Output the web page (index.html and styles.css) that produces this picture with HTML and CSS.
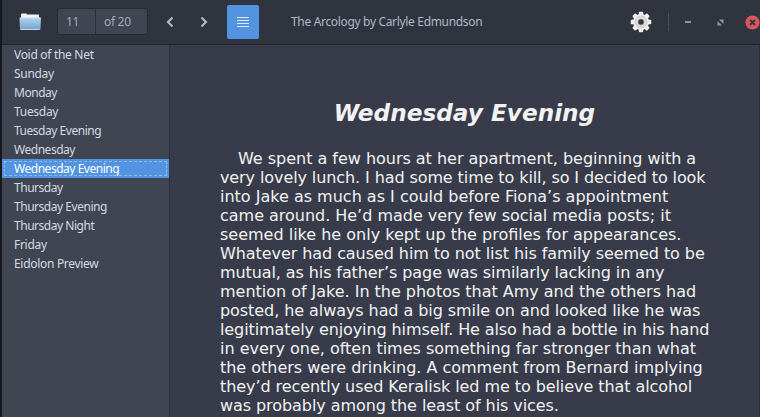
FILE: index.html
```html
<!DOCTYPE html>
<html lang="en">
<head>
<meta charset="utf-8">
<title>The Arcology by Carlyle Edmundson</title>
<link rel="stylesheet" href="styles.css">
</head>
<body>
<div class="window">
  <header class="toolbar">
    <svg class="folder" width="24" height="20" viewBox="0 0 24 20">
      <defs><linearGradient id="blue" x1="0" y1="0" x2="0" y2="1"><stop offset="0" stop-color="#b5d3ea"/><stop offset="1" stop-color="#6fa3cd"/></linearGradient></defs>
      <path d="M3 9V2.500q0-1 1-1H8q1 0 1 1H20q1 0 1 1V9z" fill="#f4f4f2"/>
      <path d="M1.500 6.500q0-1 1-1h19.500q1 0 1 1L22.500 17q0 1-1 1H3q-1 0-1-1z" fill="url(#blue)"/>
      <path d="M2 6h20.500M2.500 17.500h19" stroke="#d4e8f5" fill="none" opacity=".8"/>
    </svg>
    <div class="pager"><span class="page">11</span><span class="total">of 20</span></div>
    <svg class="prev" width="10" height="12" viewBox="0 0 10 12"><path d="M7.500 1.500L3 6l4.500 4.500"/></svg>
    <svg class="next" width="10" height="12" viewBox="0 0 10 12"><path d="M2.500 1.500L7 6l-4.500 4.500"/></svg>
    <button class="contents" aria-label="Contents">
      <svg width="12" height="11" viewBox="0 0 12 11"><path d="M0 .5h12M0 3.500h12M0 6.500h12M0 9.500h12"/></svg>
    </button>
    <h1 class="title">The Arcology by Carlyle Edmundson</h1>
    <svg class="gear" width="22" height="22" viewBox="-11 -11 22 22">
      <g fill="#f0f0ef">
        <g id="teeth"><rect x="-2.200" y="-10.300" width="4.400" height="20.600" rx="1"/><rect x="-10.300" y="-2.200" width="20.600" height="4.400" rx="1"/></g>
        <use href="#teeth" transform="rotate(45)"/>
        <circle r="8"/>
      </g>
      <circle r="6" fill="#deddda" stroke="#c2c2c0" stroke-width=".8"/>
      <circle r="3" fill="#34373f" stroke="#999" stroke-width=".7"/>
    </svg>
    <span class="divider"></span>
    <span class="minimize"></span>
    <svg class="restore" width="7" height="7" viewBox="0 0 7 7"><path d="M2 .5h4.500V5zM.5 2v4.500H5z"/></svg>
    <svg class="close" width="15" height="15" viewBox="0 0 15 15"><circle cx="7.500" cy="7.500" r="7.100" fill="#d8565f"/><path d="M5 5l5 5M10 5l-5 5" stroke="#343744" stroke-width="1.800"/></svg>
  </header>
  <div class="body">
    <nav class="sidebar">
      <div class="item">Void of the Net</div>
      <div class="item">Sunday</div>
      <div class="item day">Monday</div>
      <div class="item">Tuesday</div>
      <div class="item day">Tuesday Evening</div>
      <div class="item day">Wednesday</div>
      <div class="item day selected">Wednesday Evening</div>
      <div class="item day">Thursday</div>
      <div class="item day">Thursday Evening</div>
      <div class="item day">Thursday Night</div>
      <div class="item">Friday</div>
      <div class="item">Eidolon Preview</div>
    </nav>
    <main class="reader">
      <h2>Wednesday Evening</h2>
      <p><span class="snug">We spent a few hours at her apartment, beginning with a</span><br><span class="tight">very lovely lunch. I had some time to kill, so I decided to look</span><br>into Jake as much as I could before Fiona’s appointment<br><span class="snug">came around. He’d made very few social media posts; it</span><br>seemed like he only kept up the profiles for appearances.<br><span class="close-set">Whatever had caused him to not list his family seemed to be</span><br><span class="tight">mutual, as his father’s page was similarly lacking in any</span><br><span class="snug">mention of Jake. In the photos that Amy and the others had</span><br><span class="close-set">posted, he always had a big smile on and looked like he was</span><br><span class="tight">legitimately enjoying himself. He also had a bottle in his hand</span><br>in every one, often times something far stronger than what<br><span class="snug">the others were drinking. A comment from Bernard implying</span><br><span class="close-set">they’d recently used Keralisk led me to believe that alcohol</span><br><span class="close-set">was probably among the least of his vices.</span></p>
    </main>
  </div>
</div>
</body>
</html>
```
FILE: styles.css
```css
* { box-sizing: border-box; }
body { margin: 0; background: #17191f; overflow: hidden; }
.window {
  height: 417px;
  padding-left: 2px;
  display: flex;
  flex-direction: column;
  font: 12px/19px "Noto Sans", sans-serif;
  letter-spacing: -0.3px;
}
.toolbar {
  height: 45px;
  flex: none;
  display: flex;
  align-items: center;
  background: #2f343f;
  border-bottom: 1px solid #22252e;
  color: #afb8c6;
}
.toolbar > * { flex: none; }
.folder { margin-left: 16px; }
.pager {
  display: flex;
  width: 91px;
  height: 27px;
  margin: 0 0 1px 15px;
  border: 1px solid #262a33;
  border-radius: 3px;
  background: #404552;
  line-height: 25px;
  color: #a4aab5;
}
.page { width: 38px; padding-left: 8px; border-right: 1px solid #2b2e39; }
.total { padding-left: 8px; }
.prev { margin-left: 17px; }
.next { margin-left: 24px; }
.prev, .next { fill: none; stroke: #b5bac4; stroke-width: 2.1; }
.contents {
  width: 32px;
  height: 34px;
  margin-left: 18px;
  padding: 0;
  border: 0;
  border-radius: 2px;
  background: #5294e2;
  display: grid;
  place-items: center;
}
.contents svg { stroke: #dceafa; }
.title { margin: 0 0 1px 32px; width: 339px; font: inherit; letter-spacing: -0.33px; white-space: nowrap; }
.divider { width: 1px; height: 18px; margin-left: 16px; background: #4b4f5a; }
.minimize { width: 6px; height: 2px; margin-left: 16px; background: #90959f; }
.restore { margin-left: 26px; fill: #90959f; }
.close { margin-left: 21px; }
.body { flex: 1; display: flex; min-height: 0; }
.sidebar {
  width: 168px;
  flex: none;
  background: #404552;
  border-right: 1px solid #2d303b;
  color: #d3dae3;
}
.item { height: 19px; padding-left: 12px; white-space: nowrap; }
.day { letter-spacing: -0.47px; }
.selected {
  background: #5294e2;
  color: #fff;
  outline: 1px dashed #8cb9ee;
  outline-offset: -3px;
}
.reader {
  flex: 1;
  padding: 54px 0 0 50px;
  background: #383c4a;
  border-right: 1px solid #2b2e39;
  font: 16px/19px "DejaVu Sans", sans-serif;
  letter-spacing: 0;
  color: #f2f2f2;
  white-space: nowrap;
}
h2 { width: 489px; margin: 0 0 22px; font: italic bold 23.2px/28px "DejaVu Sans", sans-serif; text-align: center; }
p { margin: 0; text-indent: 18px; }
.snug { letter-spacing: -0.02px; }
.close-set { letter-spacing: -0.07px; }
.tight { letter-spacing: -0.095px; }
```
